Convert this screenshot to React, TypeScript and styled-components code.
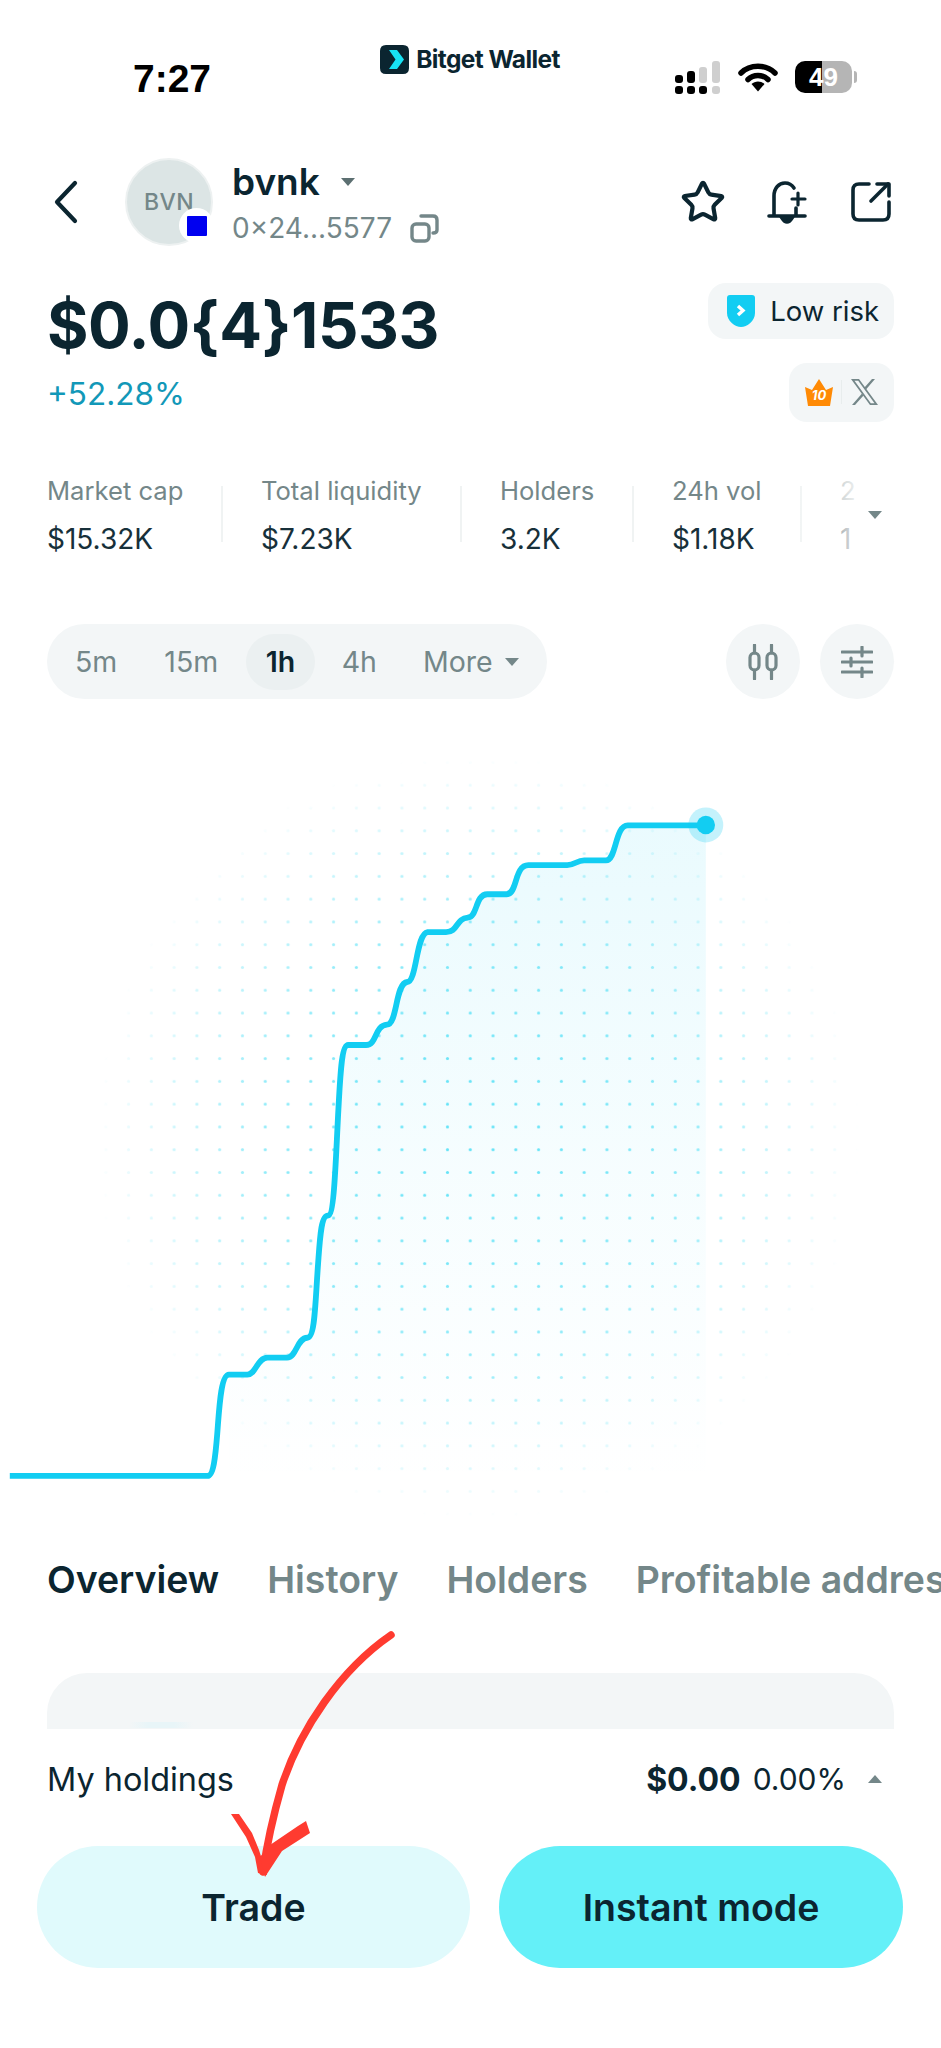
import * as React from 'react';
import styled, { createGlobalStyle } from 'styled-components';
import { Star } from 'lucide-react';

const GlobalStyle = createGlobalStyle`
	html, body {
		margin: 0;
		padding: 0;
		background: #ffffff;
	}
	* {
		box-sizing: border-box;
	}
`

const INK = '#0b2530';
const GRAY = '#748789';

const Page = styled.main`
	position: relative;
	width: 941px;
	height: 2048px;
	overflow: hidden;
	background: #ffffff;
	color: ${INK};
	font-family: Inter, "Noto Sans", sans-serif;
`

const StatusBar = styled.div`
	display: flex;
	justify-content: space-between;
	height: 130px;
	padding: 44px 89px 0 133px;
`

const Clock = styled.span`
	margin-top: 12px;
	font-family: "Liberation Sans", sans-serif;
	font-weight: 700;
	font-size: 39px;
	line-height: 45px;
	color: #000000;
`

const Brand = styled.div`
	display: flex;
	align-items: center;
	gap: 7px;
	height: 30px;
	margin-left: 54px;
	font-family: Inter, sans-serif;
	font-weight: 700;
	font-size: 24.5px;
	letter-spacing: -0.6px;
`

const StatusIcons = styled.div`
	display: flex;
	align-items: center;
	gap: 17px;
	height: 34px;
	margin-top: 16px;
`

const Battery = styled.div`
	position: relative;
	display: flex;
	align-items: center;
	justify-content: center;
	width: 57px;
	height: 32px;
	border-radius: 10px;
	background: linear-gradient(90deg, #000000 0 47%, #b5b5b5 47% 100%);
	font-family: "Liberation Sans", sans-serif;
	font-weight: 700;
	font-size: 26px;
	color: #ffffff;

	&::after {
		content: '';
		position: absolute;
		right: -5px;
		top: 10px;
		width: 3px;
		height: 12px;
		border-radius: 0 3px 3px 0;
		background: #b5b5b5;
	}
`

const Header = styled.header`
	display: flex;
	align-items: center;
	height: 88px;
	margin-top: 28px;
	padding: 0 49px 0 53px;
`

const BackIcon = styled.svg`
	width: 27px;
	height: 44px;
	margin-right: 45px;
`

const Avatar = styled.div`
	position: relative;
	display: flex;
	align-items: center;
	justify-content: center;
	width: 88px;
	height: 88px;
	border: 2px solid #edf1f1;
	border-radius: 50%;
	background: #dce5e5;
	font-weight: 500;
	font-size: 23px;
	letter-spacing: 0.4px;
	color: ${GRAY};
`

const ChainBadge = styled.span`
	position: absolute;
	right: -3px;
	bottom: 1px;
	display: flex;
	align-items: center;
	justify-content: center;
	width: 35px;
	height: 35px;
	border-radius: 50%;
	background: #ffffff;

	&::after {
		content: '';
		width: 20px;
		height: 20px;
		border-radius: 1px;
		background: #0000f0;
	}
`

const TokenInfo = styled.div`
	display: flex;
	flex-direction: column;
	gap: 8px;
	margin-left: 19px;
`

const NameRow = styled.div`
	display: flex;
	align-items: center;
	gap: 21px;
	font-weight: 600;
	font-size: 37px;
	line-height: 44px;
`

const Caret = styled.span<{ $up?: boolean; $size?: number; $color?: string }>`
	display: inline-block;
	width: 0;
	height: 0;
	border-left: ${({ $size }) => $size ?? 7}px solid transparent;
	border-right: ${({ $size }) => $size ?? 7}px solid transparent;
	${({ $up }) => ($up ? 'border-bottom' : 'border-top')}: ${({ $size }) => ($size ?? 7) + 1}px solid ${({ $color }) => $color ?? '#5c6f71'};
`

const AddressRow = styled.div`
	display: flex;
	align-items: center;
	gap: 18px;
	font-size: 28px;
	line-height: 32px;
	color: ${GRAY};
`

const HeaderActions = styled.div`
	display: flex;
	align-items: center;
	gap: 41px;
	margin-left: auto;
	color: ${INK};
`

const PriceRow = styled.section`
	display: flex;
	justify-content: space-between;
	height: 139px;
	margin-top: 37px;
	padding: 0 47px;
`

const PriceBlock = styled.div`
	display: flex;
	flex-direction: column;
`

const Price = styled.div`
	margin-top: 2px;
	font-weight: 700;
	font-size: 63.4px;
	line-height: 80px;
	letter-spacing: -0.4px;
`

const Change = styled.div`
	margin-top: 11px;
	font-size: 31.5px;
	line-height: 36px;
	color: #1298b8;
`

const Tags = styled.div`
	display: flex;
	flex-direction: column;
	align-items: flex-end;
	gap: 24px;
`

const Tag = styled.div<{ $height: number; $left: number; $right: number }>`
	display: flex;
	align-items: center;
	height: ${({ $height }) => $height}px;
	padding: 0 ${({ $right }) => $right}px 0 ${({ $left }) => $left}px;
	border-radius: 18px;
	background: #f3f6f7;
`

const RiskText = styled.span`
	margin-left: 15px;
	font-size: 27.5px;
`

const TagDivider = styled.span`
	width: 1px;
	height: 24px;
	margin: 0 9px 0 8px;
	background: #e8eded;
`

const Stats = styled.section`
	position: relative;
	display: flex;
	height: 80px;
	margin-top: 53px;
	padding-left: 47px;
`

const Stat = styled.div<{ $width: number; $divided?: boolean }>`
	position: relative;
	flex: 0 0 ${({ $width }) => $width}px;
	white-space: nowrap;

	${({ $divided, $width }) => $divided && `
		&::after {
			content: '';
			position: absolute;
			left: ${$width - 40}px;
			top: 11px;
			width: 2px;
			height: 56px;
			background: #f0f3f3;
		}
	`}
`

const StatLabel = styled.div`
	font-size: 25.6px;
	line-height: 32px;
	color: ${GRAY};
`

const StatValue = styled.div`
	margin-top: 16px;
	font-size: 28px;
	line-height: 32px;
	color: #17303a;
`

const StatsFade = styled.div`
	position: absolute;
	top: 0;
	right: 0;
	bottom: 0;
	display: flex;
	align-items: center;
	justify-content: flex-end;
	width: 150px;
	padding: 0 59px 0 0;
	background: linear-gradient(90deg, rgba(255, 255, 255, 0) 0, rgba(255, 255, 255, 0.9) 45%, #ffffff 62%);
`

const Controls = styled.section`
	display: flex;
	align-items: center;
	justify-content: space-between;
	height: 75px;
	margin-top: 69px;
	padding: 0 47px;
`

const Intervals = styled.div`
	display: flex;
	align-items: center;
	width: 500px;
	height: 75px;
	padding: 0 28px;
	border-radius: 38px;
	background: #f3f6f7;
`

const Interval = styled.span<{ $active?: boolean; $gap: number }>`
	display: flex;
	align-items: center;
	justify-content: center;
	gap: 12px;
	height: 56px;
	margin-right: ${({ $gap }) => $gap}px;
	padding: ${({ $active }) => ($active ? '0 19.5px' : '0')};
	border-radius: 28px;
	background: ${({ $active }) => ($active ? '#ebf0f1' : 'transparent')};
	font-weight: ${({ $active }) => ($active ? 600 : 400)};
	font-size: 28.5px;
	color: ${({ $active }) => ($active ? INK : GRAY)};
`

const ChartTools = styled.div`
	display: flex;
	gap: 20px;
`

const RoundButton = styled.span`
	display: flex;
	align-items: center;
	justify-content: center;
	width: 74px;
	height: 75px;
	border-radius: 50%;
	background: #f3f6f7;
`

const ChartWrap = styled.section`
	height: 760px;
	margin-top: 61px;
`

const ChartSvg = styled.svg`
	display: block;
	width: 941px;
	height: 760px;
`

const Tabs = styled.nav`
	display: flex;
	gap: 48px;
	height: 60px;
	margin-top: 30px;
	padding-left: 47px;
	white-space: nowrap;
`

const TabItem = styled.span<{ $active?: boolean }>`
	font-weight: 600;
	font-size: 37.4px;
	line-height: 60px;
	color: ${({ $active }) => ($active ? INK : GRAY)};
`

const OverviewCard = styled.div`
	display: flex;
	align-items: flex-end;
	height: 56px;
	margin: 63px 47px 0;
	padding: 0 0 1px 82px;
	border-radius: 40px 40px 0 0;
	background: #f3f6f7;
`

const CardDots = styled.span`
	width: 64px;
	height: 6px;
	background: linear-gradient(90deg, #f3f6f7, #e8f5f8 30%, #e8f5f8 70%, #f3f6f7);
`

const Holdings = styled.section`
	display: flex;
	align-items: center;
	justify-content: space-between;
	height: 40px;
	margin-top: 30px;
	padding: 0 59px 0 47px;
`

const HoldingsLabel = styled.span`
	font-size: 32.4px;
`

const HoldingsValue = styled.div`
	display: flex;
	align-items: center;
	gap: 12px;
	font-size: 30px;
`

const HoldingsAmount = styled.b`
	font-weight: 700;
	font-size: 32px;
`

const HoldingsToggle = styled.span`
	display: flex;
	margin-left: 10px;
`

const Actions = styled.section`
	display: flex;
	gap: 29px;
	margin-top: 47px;
	padding-left: 37px;
`

const ActionButton = styled.button<{ $width: number; $primary?: boolean }>`
	width: ${({ $width }) => $width}px;
	height: 122px;
	border: none;
	border-radius: 61px;
	background: ${({ $primary }) => ($primary ? '#64f0f8' : '#e0fafc')};
	font-family: inherit;
	font-weight: 600;
	font-size: 37.5px;
	color: ${INK};
`

const AnnotationArrow = styled.svg`
	position: absolute;
	left: 220px;
	top: 1620px;
	width: 180px;
	height: 270px;
`

function StatusGlyphs() {
	return (
		<>
			<svg width="46" height="33" viewBox="0 0 46 33">
				<rect x="0" y="14" width="8" height="8" rx="3" fill="#000" />
				<rect x="12" y="10" width="8" height="12" rx="3" fill="#000" />
				<rect x="24" y="6" width="8" height="16" rx="3" fill="#cfcfcf" />
				<rect x="37" y="0" width="8" height="22" rx="3" fill="#cfcfcf" />
				<rect x="0" y="25" width="8" height="8" rx="3" fill="#000" />
				<rect x="12" y="25" width="8" height="8" rx="3" fill="#000" />
				<rect x="24" y="25" width="8" height="8" rx="3" fill="#000" />
				<rect x="37" y="25" width="8" height="8" rx="3" fill="#cfcfcf" />
			</svg>
			<svg width="40" height="30" viewBox="0 0 40 30">
				<path d="M3 11 C12 2 28 2 37 11" fill="none" stroke="#000" strokeWidth="5.5" strokeLinecap="round" />
				<path d="M10 17.5 C15.5 12 24.5 12 30 17.5" fill="none" stroke="#000" strokeWidth="5.5" strokeLinecap="round" />
				<path d="M13.5 22 C17 18.5 23 18.5 26.5 22 L20 29.5 Z" fill="#000" />
			</svg>
			<Battery>49</Battery>
		</>
	)
}

export default function App() {
	return (
		<Page>
			<GlobalStyle />
			<StatusBar>
				<Clock>7:27</Clock>
				<Brand>
					<svg width="29" height="29" viewBox="0 0 29 29">
						<path d="M6 0 H23 Q29 0 29 6 V23 Q29 29 23 29 H6 Q0 29 0 23 V6 Q0 0 6 0 Z" fill="#0b2530" />
						<path d="M9 5 H17 L24 14.5 L17 24 H9 L15.5 14.5 Z" fill="#17e3f5" />
					</svg>
					Bitget Wallet
				</Brand>
				<StatusIcons>
					<StatusGlyphs />
				</StatusIcons>
			</StatusBar>

			<Header>
				<BackIcon viewBox="0 0 27 44">
					<path d="M22 3 L4 22 L22 41" fill="none" stroke={INK} strokeWidth="4.2" strokeLinecap="round" strokeLinejoin="round" />
				</BackIcon>
				<Avatar>
					BVN
					<ChainBadge />
				</Avatar>
				<TokenInfo>
					<NameRow>
						bvnk
						<Caret />
					</NameRow>
					<AddressRow>
						0×24...5577
						<svg width="29" height="29" viewBox="0 0 29 29" fill="none" stroke={GRAY} strokeWidth="3.4">
							<rect x="2" y="10" width="17" height="17" rx="4" />
							<path d="M11 2 H23 Q27 2 27 6 V16 Q27 19 23 19" strokeLinecap="round" />
						</svg>
					</AddressRow>
				</TokenInfo>
				<HeaderActions>
					<Star size={46} strokeWidth={2.2} />
					<svg width="42" height="44" viewBox="0 0 42 44" fill="none" stroke={INK} strokeWidth="3.6" strokeLinecap="round">
						<path d="M7 35 V16 C7 8 12 3 18 3 C22 3 25 5 27 8" />
						<path d="M29 28 V35" />
						<path d="M2 36 H38" />
						<path d="M15 38 Q20 46 25 38 Z" fill={INK} />
						<path d="M31 13 V25 M25 19 H38" strokeWidth="3.2" />
					</svg>
					<svg width="42" height="42" viewBox="0 0 42 42" fill="none" stroke={INK} strokeWidth="3.6" strokeLinecap="round" strokeLinejoin="round">
						<path d="M19 3 H9 Q3 3 3 9 V33 Q3 39 9 39 H33 Q39 39 39 33 V21" />
						<path d="M21 20 L38 3" />
						<path d="M27 3 H39 V15" />
					</svg>
				</HeaderActions>
			</Header>

			<PriceRow>
				<PriceBlock>
					<Price>$0.0{'{4}'}1533</Price>
					<Change>+52.28%</Change>
				</PriceBlock>
				<Tags>
					<Tag $height={56} $left={19} $right={15}>
						<svg width="28" height="32" viewBox="0 0 28 32">
							<path d="M3 0 H25 Q28 0 28 3 V18 C28 26 20 32 14 32 C8 32 0 26 0 18 V3 Q0 0 3 0 Z" fill="#12cdf2" />
							<path d="M11 11 L16 15.5 L11 20" fill="none" stroke="#ffffff" strokeWidth="3.4" />
						</svg>
						<RiskText>Low risk</RiskText>
					</Tag>
					<Tag $height={60} $left={16} $right={16}>
						<svg width="28" height="27" viewBox="0 0 28 27">
							<path d="M3 27 L0 8 L7 11 L14 0 L21 11 L28 8 L25 27 Z" fill="#ff8a05" />
							<text x="14" y="21" textAnchor="middle" fontFamily="Inter, sans-serif" fontWeight="700" fontStyle="italic" fontSize="13" fill="#ffffff">10</text>
						</svg>
						<TagDivider />
						<svg width="27" height="26" viewBox="0 0 27 26">
							<path d="M0 0 H8 L27 26 H19 Z M3.5 1.8 L19.8 24.2 H23.5 L7.2 1.8 Z" fill={GRAY} fillRule="evenodd" />
							<path d="M24 0 L15 10.5 L13.5 8.5 L21 0 Z M1 26 L11 14.5 L12.5 16.5 L4 26 Z" fill={GRAY} />
						</svg>
					</Tag>
				</Tags>
			</PriceRow>

			<Stats>
				<Stat $width={214} $divided>
					<StatLabel>Market cap</StatLabel>
					<StatValue>$15.32K</StatValue>
				</Stat>
				<Stat $width={239} $divided>
					<StatLabel>Total liquidity</StatLabel>
					<StatValue>$7.23K</StatValue>
				</Stat>
				<Stat $width={172} $divided>
					<StatLabel>Holders</StatLabel>
					<StatValue>3.2K</StatValue>
				</Stat>
				<Stat $width={168} $divided>
					<StatLabel>24h vol</StatLabel>
					<StatValue>$1.18K</StatValue>
				</Stat>
				<Stat $width={60}>
					<StatLabel>2</StatLabel>
					<StatValue>1</StatValue>
				</Stat>
				<StatsFade>
					<Caret $color={GRAY} />
				</StatsFade>
			</Stats>

			<Controls>
				<Intervals>
					<Interval $gap={47}>5m</Interval>
					<Interval $gap={28}>15m</Interval>
					<Interval $active $gap={27}>1h</Interval>
					<Interval $gap={46}>4h</Interval>
					<Interval $gap={0}>
						More
						<Caret $color={GRAY} />
					</Interval>
				</Intervals>
				<ChartTools>
					<RoundButton>
						<svg width="30" height="36" viewBox="0 0 30 36" fill="none" stroke={GRAY} strokeWidth="3.2" strokeLinecap="round">
							<rect x="2" y="9" width="9" height="17" rx="4.5" />
							<rect x="19" y="9" width="9" height="17" rx="4.5" />
							<path d="M6.5 1 V9 M6.5 26 V35 M23.5 1 V9 M23.5 26 V35" />
						</svg>
					</RoundButton>
					<RoundButton>
						<svg width="32" height="32" viewBox="0 0 32 32" fill="none" stroke={GRAY} strokeWidth="3.2" strokeLinecap="round">
							<path d="M1 6 H31 M1 16 H31 M1 26 H31" />
							<path d="M21 1 V10 M10 12 V20 M21 22 V31" />
						</svg>
					</RoundButton>
				</ChartTools>
			</Controls>

			<ChartWrap>
				<ChartSvg viewBox="0 0 1941 1568">
					<defs>
						<pattern id="gridDots" x="6.5" y="-18.5" width="47" height="47" patternUnits="userSpaceOnUse">
							<circle cx="23.5" cy="23.5" r="3.2" fill="#5fe3f7" />
						</pattern>
						<radialGradient id="dotFade" cx="984" cy="778" r="790" gradientUnits="userSpaceOnUse">
							<stop offset="0" stopColor="#fff" stopOpacity="1" />
							<stop offset="0.55" stopColor="#fff" stopOpacity="0.7" />
							<stop offset="1" stopColor="#fff" stopOpacity="0" />
						</radialGradient>
						<mask id="dotMask" maskUnits="userSpaceOnUse" x="0" y="0" width="1941" height="1568">
							<rect width="1941" height="1568" fill="url(#dotFade)" />
						</mask>
						<linearGradient id="areaFill" x1="0" y1="0" x2="0" y2="1">
							<stop offset="0" stopColor="#12cdf2" stopOpacity="0.09" />
							<stop offset="0.5" stopColor="#12cdf2" stopOpacity="0.04" />
							<stop offset="1" stopColor="#12cdf2" stopOpacity="0" />
						</linearGradient>
					</defs>
					<rect width="1941" height="1568" fill="url(#gridDots)" mask="url(#dotMask)" />
					<path
						d="M472 1268 H510 C528 1268 530 1233 552 1233 H592 C612 1233 612 1192 634 1192 C650 1192 650 1120 656 1040 C660 985 662 940 676 940 C690 940 692 830 698 720 C702 650 704 588 718 588 H755 C778 588 772 548 798 546 C820 546 815 460 840 458 C860 458 858 358 882 355 H920 C945 355 940 327 965 325 C985 325 980 277 1005 277 H1045 C1068 277 1060 217 1090 217 H1170 C1185 217 1190 207 1205 207 H1250 C1272 207 1268 135 1295 135 H1456 V1500 H472 Z"
						fill="url(#areaFill)"
					/>
					<path
						d="M20 1477 H428 C440 1477 444 1440 448 1390 C452 1340 455 1268 472 1268 H510 C528 1268 530 1233 552 1233 H592 C612 1233 612 1192 634 1192 C650 1192 650 1120 656 1040 C660 985 662 940 676 940 C690 940 692 830 698 720 C702 650 704 588 718 588 H755 C778 588 772 548 798 546 C820 546 815 460 840 458 C860 458 858 358 882 355 H920 C945 355 940 327 965 325 C985 325 980 277 1005 277 H1045 C1068 277 1060 217 1090 217 H1170 C1185 217 1190 207 1205 207 H1250 C1272 207 1268 135 1295 135 H1456"
						fill="none"
						stroke="#12cdf2"
						strokeWidth="12"
					/>
					<circle cx="1456" cy="134" r="36" fill="#12cdf2" fillOpacity="0.25" />
					<circle cx="1456" cy="134" r="19" fill="#12cdf2" />
				</ChartSvg>
			</ChartWrap>

			<Tabs>
				<TabItem $active>Overview</TabItem>
				<TabItem>History</TabItem>
				<TabItem>Holders</TabItem>
				<TabItem>Profitable addresses</TabItem>
			</Tabs>

			<OverviewCard>
				<CardDots />
			</OverviewCard>

			<Holdings>
				<HoldingsLabel>My holdings</HoldingsLabel>
				<HoldingsValue>
					<HoldingsAmount>$0.00</HoldingsAmount>
					0.00%
					<HoldingsToggle>
						<Caret $up $color={GRAY} />
					</HoldingsToggle>
				</HoldingsValue>
			</Holdings>

			<Actions>
				<ActionButton $width={433}>Trade</ActionButton>
				<ActionButton $width={404} $primary>Instant mode</ActionButton>
			</Actions>

			{/* hand drawn arrow somebody put on top of the screenshot */}
			<AnnotationArrow viewBox="220 1620 180 270">
				<path
					d="M391 1635 C340 1670 300 1730 282 1785 C272 1820 266 1850 263 1872"
					fill="none"
					stroke="#ff3b30"
					strokeWidth="7.5"
					strokeLinecap="round"
				/>
				<path d="M231 1814 L239 1814 L252 1833 L259 1850 L267 1875 L258 1873 L255 1857 L246 1837 Z" fill="#ff3b30" />
				<path d="M306 1821 L310 1833 L282 1851 L265 1877 L260 1857 L270 1845 L298 1826 Z" fill="#ff3b30" />
			</AnnotationArrow>
		</Page>
	)
}
